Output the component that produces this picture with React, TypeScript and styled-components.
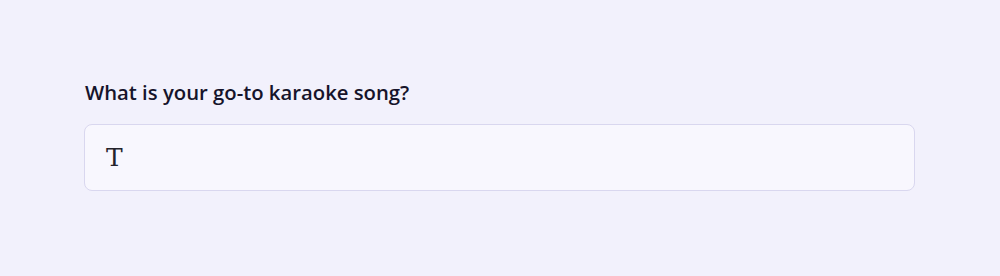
import styled, { createGlobalStyle } from "styled-components"

const GlobalStyle = createGlobalStyle`
    html, body {
        margin: 0;
        padding: 0;
        background: #f2f1fc;
    }
`

const Page = styled.div`
    width: 1000px;
    height: 276px;
    box-sizing: border-box;
    padding: 77px 85px 0 84px;
    background: #f2f1fc;
    display: flex;
    flex-direction: column;
    gap: 17px;
`

const Label = styled.label`
    font-family: "Open Sans", "Noto Sans", sans-serif;
    font-weight: 600;
    font-size: 20.3px;
    line-height: 30px;
    color: #16142b;
    padding-left: 1px;
`

const Field = styled.div`
    height: 67px;
    box-sizing: border-box;
    border: 1px solid #d9d7ef;
    border-radius: 8px;
    background: #f8f7fe;
    display: flex;
    align-items: center;
    padding: 0 21px;
`

const Value = styled.span`
    font-family: "DejaVu Serif", "Liberation Serif", serif;
    font-weight: 300;
    font-size: 25px;
    color: #24232c;
`

const App: React.FC = () => {
    return (
        <>
            <GlobalStyle />
            <Page>
                <Label>What is your go-to karaoke song?</Label>
                <Field>
                    <Value>T</Value>
                </Field>
            </Page>
        </>
    )
}

export default App
